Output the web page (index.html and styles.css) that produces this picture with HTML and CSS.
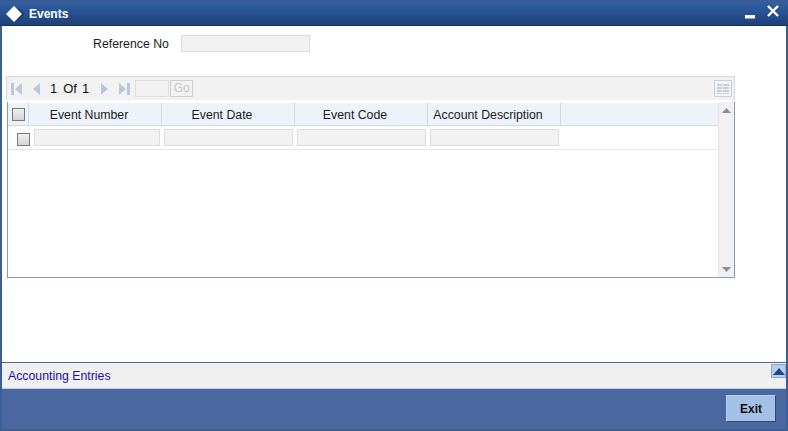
FILE: index.html
```html
<!DOCTYPE html>
<html lang="en">
<head>
<meta charset="utf-8">
<title>Events</title>
<link rel="stylesheet" href="styles.css">
</head>
<body>
<div class="window">
  <header class="titlebar">
    <svg class="logo" width="18" height="16" viewBox="0 0 18 16"><path d="M11 1 18 8 11 15 15 8Z" fill="#16305f"/><path d="M8 0 16 8 8 16 0 8Z" fill="#fff"/></svg>
    <span class="title">Events</span>
    <svg class="minimize" width="10" height="4" viewBox="0 0 10 4"><rect width="10" height="3.5" fill="#fff"/></svg>
    <svg class="close" width="12" height="12" viewBox="0 0 12 12"><path d="M1 1 11 11M11 1 1 11" stroke="#fff" stroke-width="2.4"/></svg>
  </header>
  <main class="content">
    <div class="ref-row">
      <label class="ref-label">Reference No</label>
      <div class="field ref-field"></div>
    </div>
    <div class="toolbar">
      <svg class="pager first" width="11" height="12" viewBox="0 0 11 12"><rect width="3" height="12" fill="#b9c6de"/><path d="M11 0V12L4 6Z" fill="#b9c6de"/></svg>
      <svg class="pager prev" width="7" height="12" viewBox="0 0 7 12"><path d="M7 0V12L0 6Z" fill="#b9c6de"/></svg>
      <span class="page-text">1</span><span class="page-text of">Of</span><span class="page-text">1</span>
      <svg class="pager next" width="7" height="12" viewBox="0 0 7 12"><path d="M0 0V12L7 6Z" fill="#b9c6de"/></svg>
      <svg class="pager last" width="11" height="12" viewBox="0 0 11 12"><path d="M0 0V12L7 6Z" fill="#b9c6de"/><rect x="8" width="3" height="12" fill="#b9c6de"/></svg>
      <div class="page-input"></div>
      <div class="go">Go</div>
      <svg class="columns" width="18" height="17" viewBox="0 0 18 17"><rect x="0.5" y="0.5" width="17" height="16" fill="#f6f6f6" stroke="#c8d0dc"/><g fill="#c3cde0"><rect x="3" y="4" width="5" height="2"/><rect x="9" y="4" width="6" height="2"/><rect x="3" y="7" width="5" height="2"/><rect x="9" y="7" width="6" height="2"/><rect x="3" y="10" width="5" height="2"/><rect x="9" y="10" width="6" height="2"/><rect x="3" y="13" width="5" height="1"/><rect x="9" y="13" width="6" height="1"/></g></svg>
    </div>
    <div class="grid">
      <div class="grid-body">
        <div class="head-row">
          <div class="cell-check"><span class="check"></span></div>
          <div class="head-cell">Event Number</div>
          <div class="head-cell">Event Date</div>
          <div class="head-cell">Event Code</div>
          <div class="head-cell">Account Description</div>
        </div>
        <div class="data-row">
          <span class="check row-check"></span>
          <div class="field cell-field first-field"></div>
          <div class="field cell-field"></div>
          <div class="field cell-field"></div>
          <div class="field cell-field"></div>
        </div>
      </div>
      <div class="scrollbar">
        <svg width="9" height="5" viewBox="0 0 9 5"><path d="M0 5 4.5 0 9 5Z" fill="#8d8d8d"/></svg>
        <svg width="9" height="5" viewBox="0 0 9 5"><path d="M0 0 4.5 5 9 0Z" fill="#8d8d8d"/></svg>
      </div>
    </div>
  </main>
  <div class="subbar">
    <a class="sub-link">Accounting Entries</a>
    <div class="collapse"><svg width="12" height="7" viewBox="0 0 12 7"><path d="M0 7 6 0 12 7Z" fill="#1f4a88"/></svg></div>
  </div>
  <footer class="footer">
    <button class="exit">Exit</button>
  </footer>
</div>
</body>
</html>
```
FILE: styles.css
```css
* { box-sizing: border-box; }
html, body { margin: 0; padding: 0; }
body { width: 788px; height: 431px; overflow: hidden; font-family: "Liberation Sans", Arial, sans-serif; font-size: 12.3px; color: #1c1c1c; }
.window { display: flex; flex-direction: column; width: 788px; height: 431px; background: #fff; border-left: 2px solid #3a5f98; border-right: 2px solid #3a5f98; border-bottom: 2px solid #3d5c90; }
.titlebar { display: flex; align-items: center; flex: none; height: 26px; margin: 0 -2px; padding: 0 9px 1px 6px; border-top: 3px solid #3a5c96; border-bottom: 1px solid #16305f; background: linear-gradient(#2f5fa3, #234a86 70%, #1f4079); }
.logo { flex: none; margin-right: 5px; }
.title { color: #fff; font-weight: bold; font-size: 12px; flex: 1; }
.minimize { margin: 6px 12px 0 0; }
.close { margin-top: -5px; }
.content { flex: 1; min-height: 0; padding: 9px 0 0 4px; }
.ref-row { display: flex; align-items: center; height: 17px; }
.ref-label { width: 175px; padding-left: 87px; }
.field { background: #f2f2f2; border: 1px solid #dcdcdc; height: 17px; }
.ref-field { width: 129px; }
.toolbar { display: flex; align-items: center; width: 729px; height: 24px; margin-top: 24px; padding: 0 2px 0 4px; background: #f2f2f2; border-top: 1px solid #d3d9e5; border-left: 1px solid #d3d9e5; border-right: 1px solid #d3d9e5; }
.pager { flex: none; }
.prev { margin-left: 11px; }
.page-text { margin-left: 8px; font-size: 13px; color: #111; }
.page-text:first-of-type { margin-left: 10px; }
.page-text.of { margin-left: 6px; }
.page-text.of + .page-text { margin-left: 5px; }
.next { margin-left: 12px; }
.last { margin-left: 11px; }
.page-input { width: 34px; height: 17px; margin-left: 5px; background: #f2f2f2; border: 1px solid #dedede; }
.go { width: 23px; height: 17px; margin-left: 1px; border: 1px solid #cfcfcf; color: #c4c4c4; font-size: 12px; line-height: 15px; text-align: center; }
.columns { margin-left: auto; }
.grid { display: flex; flex: none; width: 728px; height: 176px; margin: 2px 0 0 1px; border: 1px solid #7d9fbe; border-top: 0; }
.grid-body { flex: 1; padding-top: 1px; }
.head-row { display: flex; height: 23px; background: #eef2fb; border-bottom: 1px solid #cfd9e6; }
.cell-check { display: flex; align-items: center; width: 21px; padding-left: 4px; border-right: 1px solid #cfd9e6; }
.check { display: block; width: 13px; height: 13px; background: linear-gradient(#f0f0f0, #d4d4d4); border: 1px solid #777; }
.head-cell { width: 133px; padding-right: 12px; border-right: 1px solid #cfd9e6; line-height: 24px; text-align: center; }
.data-row { display: flex; align-items: center; height: 24px; padding: 0 0 0 9px; border-bottom: 1px solid #e2e7ee; gap: 4px; }
.row-check { margin-top: 3px; }
.cell-field { width: 129px; }
.first-field { width: 126px; }
.scrollbar { display: flex; flex-direction: column; align-items: center; justify-content: space-between; flex: none; width: 16px; padding: 6px 0 5px; background: #f1f1f1; border-left: 1px solid #e4e4e4; }
.subbar { display: flex; align-items: center; justify-content: space-between; flex: none; height: 27px; padding-top: 1px; background: #f0f0f0; border-top: 1px solid #4a6a93; border-bottom: 1px solid #c3d2ea; }
.sub-link { padding-left: 6px; color: #1a0dab; }
.collapse { display: flex; align-items: center; justify-content: center; align-self: flex-start; width: 15px; height: 14px; background: #b7cdea; border: 1px solid #8aa9d6; }
.footer { display: flex; align-items: center; justify-content: flex-end; flex: none; height: 40px; padding: 0 10px 1px 0; background: #4a67a0; }
.exit { width: 50px; height: 27px; padding: 0; background: #a3c0e6; border: 1px solid; border-color: #b9cfee #2f4a78 #2f4a78 #b9cfee; color: #111; font-family: "Liberation Sans", Arial, sans-serif; font-size: 12px; font-weight: bold; }
```
